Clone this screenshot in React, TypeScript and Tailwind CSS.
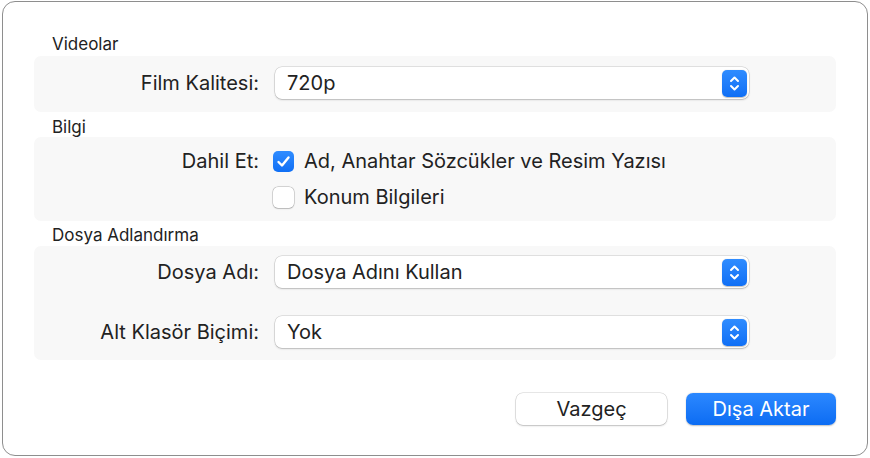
import React from "react";

const font = { fontFamily: "Inter, 'Liberation Sans', sans-serif" };

function Stepper() {
  return (
    <div className="flex h-[27px] w-[25px] items-center justify-center rounded-[5px] bg-gradient-to-b from-[#2f8cff] to-[#0f6ff5] shadow-[0_0.5px_1px_rgba(0,0,0,0.25)]">
      <svg width="13" height="19" viewBox="0 0 13 19" fill="none">
        <path d="M3 7 L6.5 3.5 L10 7" stroke="white" strokeWidth="2" strokeLinecap="round" strokeLinejoin="round" />
        <path d="M3 12 L6.5 15.5 L10 12" stroke="white" strokeWidth="2" strokeLinecap="round" strokeLinejoin="round" />
      </svg>
    </div>
  );
}

function Popup({ value }: { value: string }) {
  return (
    <div className="flex h-[32px] w-[474px] items-center justify-between rounded-[7px] bg-white pl-[12px] pr-[2px] shadow-[0_0_0_0.5px_rgba(0,0,0,0.18),0_1px_2px_rgba(0,0,0,0.18)]">
      <span className="text-[20px] leading-[24px] text-[#222]">{value}</span>
      <Stepper />
    </div>
  );
}

function Checkbox({ checked }: { checked?: boolean }) {
  if (checked) {
    return (
      <div className="flex h-[21px] w-[21px] items-center justify-center rounded-[5px] bg-gradient-to-b from-[#2f8cff] to-[#0f6ff5]">
        <svg width="15" height="13" viewBox="0 0 15 13" fill="none">
          <path d="M2.5 7 L6 10.5 L12.5 2.5" stroke="white" strokeWidth="2.4" strokeLinecap="round" strokeLinejoin="round" />
        </svg>
      </div>
    );
  }
  return (
    <div className="h-[21px] w-[21px] rounded-[5px] bg-white shadow-[0_0_0_0.5px_rgba(0,0,0,0.25),0_0.5px_1.5px_rgba(0,0,0,0.15)]" />
  );
}

function SectionTitle({ children }: { children: React.ReactNode }) {
  return <div className="h-[20px] pl-[18px] text-[17px] leading-[20px] text-[#222]">{children}</div>;
}

function Label({ children }: { children: React.ReactNode }) {
  return (
    <div className="w-[241px] shrink-0 pr-[16px] text-right text-[20px] leading-[24px] text-[#222]">{children}</div>
  );
}

export default function App() {
  return (
    <div className="h-[458px] w-[870px] bg-white pl-[2px] pt-[1px]" style={font}>
      <div className="flex h-[455px] w-[866px] flex-col rounded-[13px] border border-[#8e8e8e] bg-white px-[31px] pt-[32px]">
        <SectionTitle>Videolar</SectionTitle>
        <div className="mt-[2px] flex h-[56px] items-center rounded-[7px] bg-[#f8f8f8] pb-[2px]">
          <Label>Film Kalitesi:</Label>
          <Popup value="720p" />
        </div>

        <div className="mt-[5px]">
          <SectionTitle>Bilgi</SectionTitle>
        </div>
        <div className="flex h-[84px] flex-col justify-center gap-[14px] rounded-[7px] bg-[#f8f8f8]">
          <div className="flex h-[22px] items-center">
            <Label>Dahil Et:</Label>
            <div className="-ml-[2px] flex items-center gap-[10px]">
              <Checkbox checked />
              <span className="text-[20px] leading-[24px] text-[#222]">Ad, Anahtar Sözcükler ve Resim Yazısı</span>
            </div>
          </div>
          <div className="flex h-[22px] items-center">
            <div className="w-[241px] shrink-0" />
            <div className="-ml-[2px] flex items-center gap-[10px]">
              <Checkbox />
              <span className="text-[20px] leading-[24px] text-[#222]">Konum Bilgileri</span>
            </div>
          </div>
        </div>

        <div className="mt-[4px]">
          <SectionTitle>Dosya Adlandırma</SectionTitle>
        </div>
        <div className="mt-[1px] flex h-[114px] flex-col justify-center gap-[28px] rounded-[7px] bg-[#f8f8f8] pb-[2px]">
          <div className="flex items-center">
            <Label>Dosya Adı:</Label>
            <Popup value="Dosya Adını Kullan" />
          </div>
          <div className="flex items-center">
            <Label>Alt Klasör Biçimi:</Label>
            <Popup value="Yok" />
          </div>
        </div>

        <div className="mt-[33px] flex justify-end gap-[19px]">
          <button className="h-[32px] w-[151px] rounded-[7px] bg-white text-[20px] text-[#222] shadow-[0_0_0_0.5px_rgba(0,0,0,0.18),0_1px_2px_rgba(0,0,0,0.18)]">
            Vazgeç
          </button>
          <button className="h-[32px] w-[150px] rounded-[7px] bg-gradient-to-b from-[#2b88ff] to-[#0b6cf3] text-[20px] text-white shadow-[0_0.5px_1.5px_rgba(0,0,0,0.25)]">
            Dışa Aktar
          </button>
        </div>
      </div>
    </div>
  );
}
